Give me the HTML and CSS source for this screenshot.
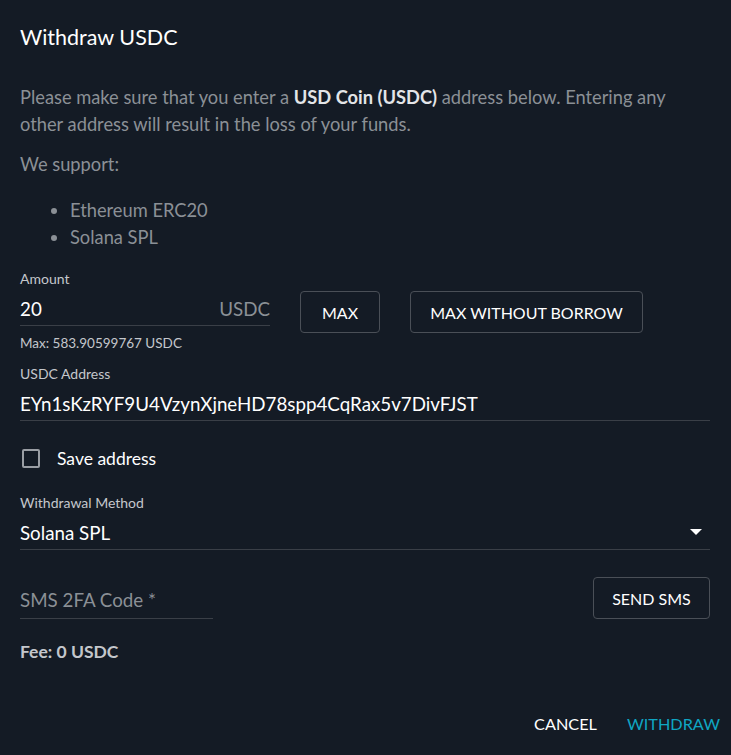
FILE: index.html
```html
<!DOCTYPE html>
<html lang="en">
<head>
    <meta charset="UTF-8">
    <meta name="viewport" content="width=device-width, initial-scale=1.0">
    <title>Withdraw USDC</title>
    <link rel="stylesheet" href="styles.css">
</head>
<body>
    <div class="dialog">
        <h2 class="title">Withdraw USDC</h2>

        <div class="content">
            <p class="note">Please make sure that you enter a <strong>USD Coin (USDC)</strong> address below. Entering any other address will result in the loss of your funds.</p>
            <p class="note">We support:</p>
            <ul class="networks">
                <li>Ethereum ERC20</li>
                <li>Solana SPL</li>
            </ul>

            <!-- Amount row -->
            <div class="amount-row">
                <div class="field amount-field">
                    <label class="field-label">Amount</label>
                    <div class="input-line">
                        <span class="input-value">20</span>
                        <span class="suffix">USDC</span>
                    </div>
                    <div class="helper">Max: 583.90599767 USDC</div>
                </div>
                <button class="outline-btn btn-max">MAX</button>
                <button class="outline-btn btn-nb">MAX WITHOUT BORROW</button>
            </div>

            <div class="field">
                <label class="field-label">USDC Address</label>
                <div class="input-line">
                    <span class="input-value">EYn1sKzRYF9U4VzynXjneHD78spp4CqRax5v7DivFJST</span>
                </div>
            </div>

            <label class="checkbox-row">
                <span class="checkbox"></span>
                <span>Save address</span>
            </label>

            <div class="field">
                <label class="field-label">Withdrawal Method</label>
                <div class="input-line">
                    <span class="input-value">Solana SPL</span>
                    <span class="caret"></span>
                </div>
            </div>

            <div class="sms-row">
                <div class="input-line sms-input">
                    <span class="placeholder">SMS 2FA Code *</span>
                </div>
                <button class="outline-btn btn-sms">SEND SMS</button>
            </div>

            <div class="fee">Fee: 0 USDC</div>
        </div>

        <div class="actions">
            <button class="text-btn">CANCEL</button>
            <button class="text-btn primary">WITHDRAW</button>
        </div>
    </div>
</body>
</html>
```

FILE: styles.css
```css
body {
    margin: 0;
    background-color: #141b25;
    font-family: 'Lato', sans-serif;
    color: #fff;
}

.dialog {
    width: 731px;
    height: 755px;
    box-sizing: border-box;
    display: flex;
    flex-direction: column;
}

.title {
    margin: 0;
    padding: 23px 20px 0;
    font-size: 21.5px;
    font-weight: 400;
    line-height: 28px;
}

.content {
    padding: 33px 21px 0 20px;
}

.note {
    margin: 0 0 13px;
    font-size: 18.3px;
    line-height: 27px;
    color: #8b9096;
}

.note strong {
    color: #e3e5e8;
}

.networks {
    margin: 19px 0 0;
    padding-left: 50px;
    font-size: 18.3px;
    line-height: 27px;
    color: #8b9096;
}

.amount-row {
    display: flex;
    align-items: flex-start;
    margin-top: 20px;
}

.field {
    display: flex;
    flex-direction: column;
}

.amount-field {
    width: 250px;
}

.field-label {
    font-size: 14px;
    line-height: 16px;
    color: #c4c7cc;
}

.input-line {
    display: flex;
    align-items: center;
    justify-content: space-between;
    box-sizing: border-box;
    height: 39px;
    padding-top: 4px;
    border-bottom: 1px solid #3a3f47;
    font-size: 18.75px;
}

.input-value {
    color: #fff;
}

.suffix {
    color: #8b9096;
}

.helper {
    margin-top: 9px;
    font-size: 13.5px;
    line-height: 16px;
    color: #c4c7cc;
}

.outline-btn {
    height: 42px;
    border: 1px solid #4a4f57;
    border-radius: 4px;
    background: transparent;
    color: #fff;
    font-family: 'Lato', sans-serif;
    font-size: 16px;
    padding: 0;
    cursor: pointer;
}

.btn-max {
    width: 80px;
    margin: 20px 0 0 30px;
}

.btn-nb {
    width: 233px;
    margin: 20px 0 0 30px;
}

.amount-row + .field {
    margin-top: 15px;
}

.checkbox-row {
    display: flex;
    align-items: center;
    gap: 17px;
    margin: 27px 0 0 2px;
    font-size: 17.5px;
}

.checkbox {
    width: 14px;
    height: 15px;
    border: 2px solid #9a9ea4;
    border-radius: 2px;
}

.checkbox-row + .field {
    margin-top: 26px;
}

.caret {
    width: 0;
    height: 0;
    margin-right: 8px;
    border-left: 6px solid transparent;
    border-right: 6px solid transparent;
    border-top: 6px solid #fff;
}

.sms-row {
    display: flex;
    justify-content: space-between;
    align-items: flex-end;
    margin-top: 27px;
}

.sms-input {
    width: 193px;
    height: 42px;
    padding-top: 4px;
}

.placeholder {
    color: #8b9096;
}

.btn-sms {
    width: 117px;
}

.fee {
    margin-top: 22px;
    font-size: 17.5px;
    font-weight: 700;
    color: #c4c7cc;
}

.actions {
    margin-top: auto;
    display: flex;
    justify-content: flex-end;
    gap: 30px;
    padding: 0 11px 22px 0;
}

.text-btn {
    background: transparent;
    border: none;
    padding: 0;
    font-family: 'Lato', sans-serif;
    font-size: 16.25px;
    color: #fff;
    cursor: pointer;
}

.text-btn.primary {
    color: #0fa6c3;
}
```
